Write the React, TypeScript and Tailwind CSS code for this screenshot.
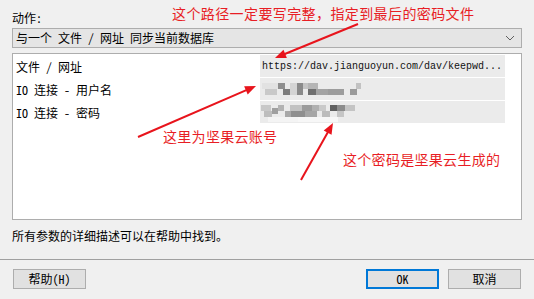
import React from 'react';

const uiFont = { fontFamily: '"Noto Sans Mono CJK SC", "Noto Sans CJK SC", "Liberation Mono", monospace' };
const redFont = { fontFamily: '"Noto Sans CJK SC", "Liberation Sans", sans-serif' };
const monoFont = { fontFamily: '"Liberation Mono", "Noto Sans CJK SC", monospace' };

type Arrow = { x1: number; y1: number; x2: number; y2: number };

const arrows: Arrow[] = [
  { x1: 358, y1: 24, x2: 275, y2: 58 },
  { x1: 138, y1: 137, x2: 256, y2: 86 },
  { x1: 301, y1: 180, x2: 333, y2: 123 },
];

// pixelated blur blocks [x, y, w, h, colour]
const blur: [number, number, number, number, string][] = [
  [262, 83, 16, 6, '#e2e2e2'],
  [265, 89, 12, 6, '#c9c9c9'],
  [278, 83, 7, 6, '#8f8f8f'],
  [283, 89, 7, 6, '#7d7d7d'],
  [290, 83, 7, 12, '#d4d4d4'],
  [297, 83, 6, 12, '#8a8a8a'],
  [303, 83, 5, 6, '#c4c4c4'],
  [308, 83, 10, 6, '#b5b5b5'],
  [308, 89, 8, 6, '#6f6f6f'],
  [316, 89, 12, 6, '#a3a3a3'],
  [328, 89, 16, 6, '#9c9c9c'],
  [350, 89, 7, 6, '#9a9a9a'],
  [356, 83, 5, 6, '#c2c2c2'],
  [261, 105, 10, 6, '#c8c8c8'],
  [264, 111, 8, 6, '#bdbdbd'],
  [272, 108, 6, 6, '#9f9f9f'],
  [278, 105, 6, 6, '#b3b3b3'],
  [285, 111, 6, 6, '#a8a8a8'],
  [290, 105, 12, 6, '#c2c2c2'],
  [291, 111, 14, 6, '#8f8f8f'],
  [302, 105, 10, 6, '#9b9b9b'],
  [305, 111, 12, 6, '#a6a6a6'],
  [312, 105, 7, 6, '#b0b0b0'],
  [319, 105, 7, 6, '#c9c9c9'],
  [322, 111, 8, 6, '#bcbcbc'],
  [330, 105, 7, 6, '#5f5f5f'],
  [337, 105, 8, 6, '#8c8c8c'],
  [337, 111, 7, 6, '#c5c5c5'],
  [345, 105, 10, 6, '#c4c4c4'],
  [268, 117, 30, 5, '#f4f4f4'],
  [298, 117, 40, 5, '#f7f7f7'],
];

function head(a: Arrow) {
  const dx = a.x2 - a.x1;
  const dy = a.y2 - a.y1;
  const len = Math.hypot(dx, dy);
  const ux = dx / len;
  const uy = dy / len;
  const bx = a.x2 - ux * 11;
  const by = a.y2 - uy * 11;
  const px = -uy * 4.5;
  const py = ux * 4.5;
  return {
    points: `${a.x2},${a.y2} ${bx + px},${by + py} ${bx - px},${by - py}`,
    lx: a.x2 - ux * 8,
    ly: a.y2 - uy * 8,
  };
}

const Annotations: React.FC = () => (
  <svg className="absolute inset-0 pointer-events-none" width={534} height={299}>
    {arrows.map((a, i) => {
      const h = head(a);
      return (
        <g key={i}>
          <line x1={a.x1} y1={a.y1} x2={h.lx} y2={h.ly} stroke="#e8141c" strokeWidth={2} />
          <polygon points={h.points} fill="#e8141c" />
        </g>
      );
    })}
  </svg>
);

const Button: React.FC<{ label: string; primary?: boolean }> = ({ label, primary }) => (
  <div
    className={
      'w-[73px] h-[20px] flex items-center justify-center bg-[#e1e1e1] text-[12px] text-black ' +
      (primary ? 'border-2 border-[#0078d7]' : 'border border-[#adadad]')
    }
  >
    {label}
  </div>
);

export default function App() {
  return (
    <div className="relative w-[534px] h-[299px] bg-[#f0f0f0] overflow-hidden text-black" style={uiFont}>
      <div className="px-[12px] pt-[10px]">
        <div className="h-[16px] leading-[16px] text-[12px]">动作:</div>
        <div className="mt-[2px] h-[20px] flex items-center justify-between bg-[#e5e5e5] border border-[#adadad] pl-[3px] pr-[6px]">
          <span className="text-[12px] leading-[16px] whitespace-pre">与一个 文件 / 网址 同步当前数据库</span>
          <svg width="10" height="6" viewBox="0 0 10 6">
            <path d="M1 1 L5 5 L9 1" fill="none" stroke="#606060" strokeWidth="1" />
          </svg>
        </div>
        <div className="mt-[5px] h-[167px] bg-white border border-[#adadad] pt-[1px] pl-[3px]">
          {[
            { label: '文件 / 网址', value: 'https://dav.jianguoyun.com/dav/keepwd...' },
            { label: 'IO 连接 - 用户名', value: '' },
            { label: 'IO 连接 - 密码', value: '' },
          ].map((row) => (
            <div key={row.label} className="flex h-[23px]">
              <div className="w-[244px] flex items-center text-[12px] whitespace-pre">{row.label}</div>
              <div className="w-[245px] h-[22px] bg-[#ebebeb] flex items-center pl-[2px]">
                <span className="text-[10px] text-[#111]" style={monoFont}>
                  {row.value}
                </span>
              </div>
            </div>
          ))}
        </div>
        <div className="mt-[8px] h-[16px] leading-[16px] text-[12px]">所有参数的详细描述可以在帮助中找到。</div>
      </div>
      <div className="mt-[15px] border-t border-[#a0a0a0]" />
      <div className="mt-[9px] px-[13px] flex items-center">
        <Button label="帮助(H)" />
        <div className="flex-1" />
        <Button label="OK" primary />
        <div className="w-[9px]" />
        <Button label="取消" />
      </div>

      <svg className="absolute inset-0 pointer-events-none" width={534} height={299}>
        {blur.map(([x, y, w, h, c], i) => (
          <rect key={i} x={x} y={y} width={w} height={h} fill={c} />
        ))}
      </svg>

      <div style={redFont} className="absolute left-[172px] top-[4px] text-[14px] leading-[18px] tracking-[0.4px] text-[#e81e25] whitespace-nowrap">
        这个路径一定要写完整，指定到最后的密码文件
      </div>
      <div style={redFont} className="absolute left-[163px] top-[127px] text-[14px] leading-[18px] tracking-[0.3px] text-[#e81e25] whitespace-nowrap">
        这里为坚果云账号
      </div>
      <div style={redFont} className="absolute left-[343px] top-[150px] text-[14px] leading-[18px] tracking-[0.3px] text-[#e81e25] whitespace-nowrap">
        这个密码是坚果云生成的
      </div>
      <Annotations />
    </div>
  );
}
